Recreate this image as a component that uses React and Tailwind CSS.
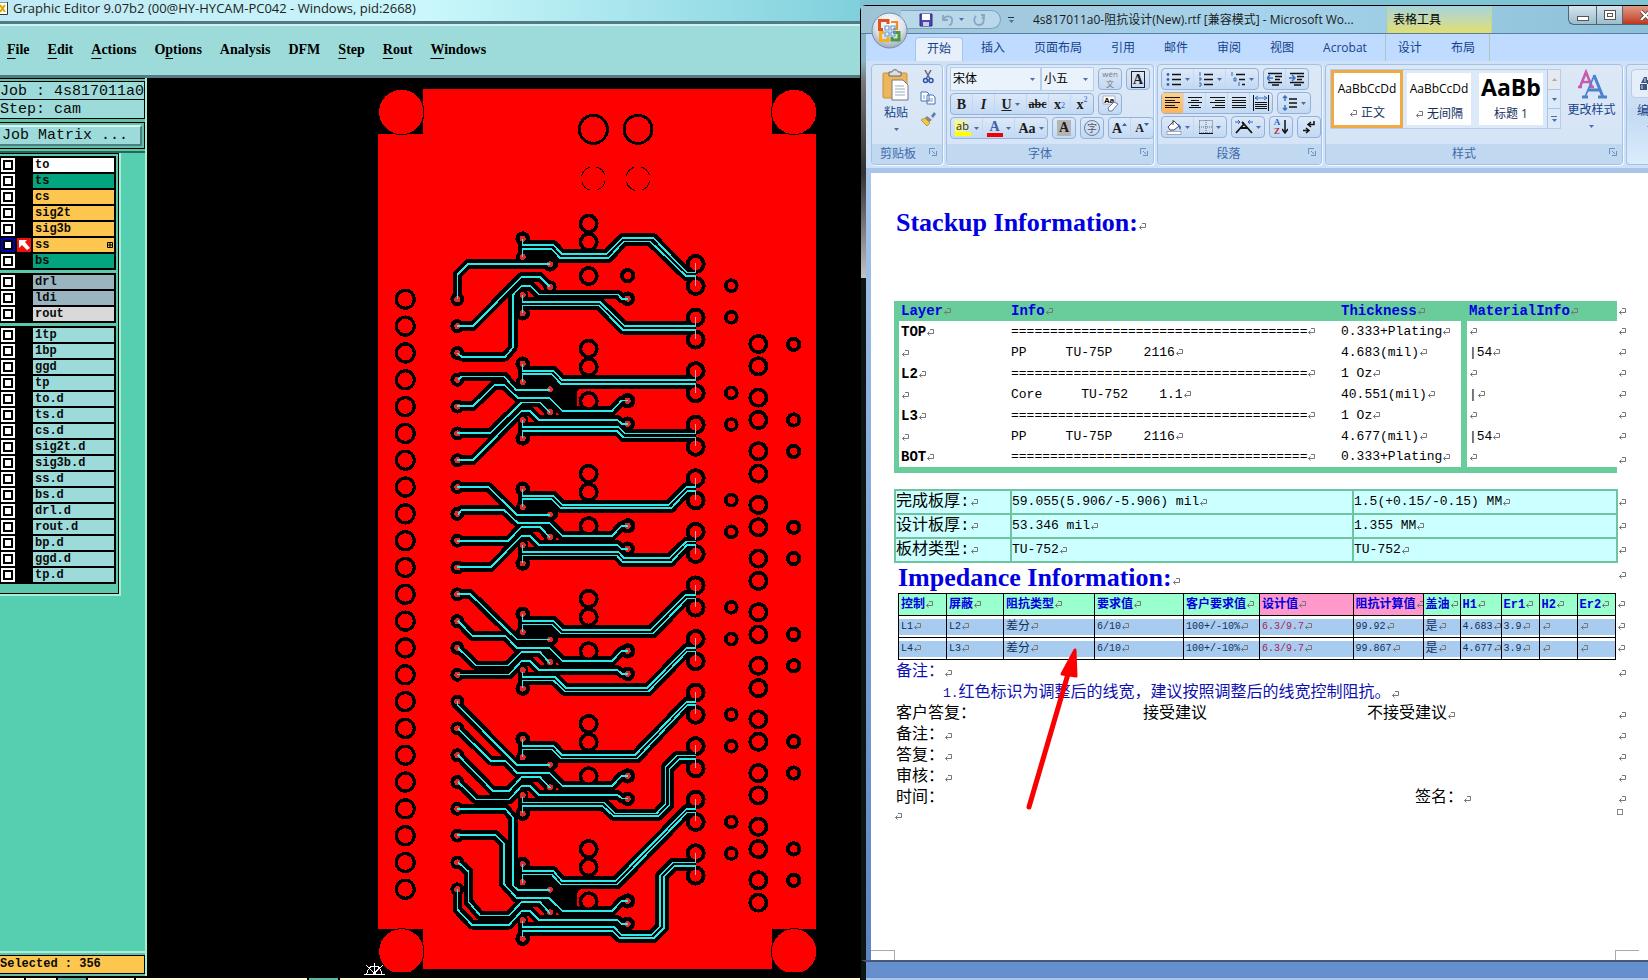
import React from 'react';
import clsx from 'clsx';

const MENUS = [
  { label: 'File', key: 0 },
  { label: 'Edit', key: 0 },
  { label: 'Actions', key: 0 },
  { label: 'Options', key: 1 },
  { label: 'Analysis', key: -1 },
  { label: 'DFM', key: -1 },
  { label: 'Step', key: 0 },
  { label: 'Rout', key: 0 },
  { label: 'Windows', key: 0 },
];

const LAYER_GROUPS = [
  [
    { name: 'to', color: 'bg-white' },
    { name: 'ts', color: 'bg-[#02a57d]' },
    { name: 'cs', color: 'bg-[#fdc64f]' },
    { name: 'sig2t', color: 'bg-[#fdc64f]' },
    { name: 'sig3b', color: 'bg-[#fdc64f]' },
    { name: 'ss', color: 'bg-[#fdc64f]', active: true },
    { name: 'bs', color: 'bg-[#02a57d]' },
  ],
  [
    { name: 'drl', color: 'bg-[#9ab5bf]' },
    { name: 'ldi', color: 'bg-[#9ab5bf]' },
    { name: 'rout', color: 'bg-[#d9d9d9]' },
  ],
  ['1tp', '1bp', 'ggd', 'tp', 'to.d', 'ts.d', 'cs.d', 'sig2t.d', 'sig3b.d', 'ss.d', 'bs.d', 'drl.d', 'rout.d', 'bp.d', 'ggd.d', 'tp.d']
    .map(name => ({ name, color: 'bg-[#9ddbda]' })),
];

// board artwork, three units to a pixel
const TRACES = [
  'M457 476V495H550L576 522H710L758 474H850L950 577H977',
  'M457 530V507H545L570 534H716L762 484H840L948 588H977',
  'M540 552H294L262 584V658',
  'M540 621L510 591H455L309 738H262',
  'M773 656H755L743 643H507L480 617H455L428 646V804L406 830H275L262 819',
  'M457 645V666H690L764 738H977',
  'M457 700V676H686L758 749H977',

  'M457 851V872H550L576 900H977',
  'M457 906V882H545L572 911H977',
  'M540 929H437L402 889H275L264 900',
  'M773 961H755L726 993H577L537 953H443L402 914H375L309 978H262',
  'M540 997L510 967H455L363 1058H262',
  'M773 1031H755L743 1020H507L480 993H455L309 1140H262',
  'M457 1020V1041H745L764 1060H977',
  'M457 1075V1052H740L760 1072H977',

  'M457 1227V1247H550L576 1274H896L950 1221H977',
  'M457 1282V1257H545L572 1284H904L952 1233H977',
  'M540 1304H440L356 1221H262',
  'M773 1338H755L726 1368H577L537 1328H443L402 1290H275L264 1303',
  'M540 1372L510 1341H455L415 1382H262',
  'M773 1407H755L743 1395H507L480 1368H455L363 1461H262',
  'M457 1395V1416H745L762 1434H898L950 1384H977',
  'M457 1450V1426H740L758 1446H904L952 1394H977',

  'M457 1602V1622H550L576 1649H842L948 1544H977',
  'M457 1657V1633H545L572 1660H850L952 1555H977',
  'M540 1678H440L300 1542H262',
  'M773 1713H755L726 1743H577L537 1703H440L406 1668H308L264 1623',
  'M540 1750L510 1716H455L415 1756H318L264 1704',
  'M773 1781H755L743 1770H507L480 1743H455L418 1783H262',
  'M457 1775V1791H555L588 1824H831L950 1704H977',
  'M457 1825V1801H550L585 1834H836L952 1714H977',

  'M457 1977V1998H550L576 2025H795L950 1865H977',
  'M457 2032V2008H545L572 2035H802L952 1875H977',
  'M540 2054H440L262 1875V1864',
  'M773 2088H755L726 2118H577L537 2078H440L406 2042H362L264 1945',
  'M540 2124L510 2091H455L418 2132H368L264 2025',
  'M773 2155H755L743 2145H507L480 2118H455L418 2158H318L264 2106',
  'M457 2150V2167H702L734 2200H860L886 2172V2062L922 2026H977',
  'M457 2200V2178H698L730 2208H865L898 2176V2068L928 2037H977',

  'M457 2353V2373H550L576 2403H736L950 2187H977',
  'M457 2408V2383H545L572 2413H742L952 2197H977',
  'M540 2429H443L428 2415V2212L406 2186H262',
  'M773 2463H755L726 2493H577L537 2454H440L402 2412V2290L376 2265H262',
  'M540 2500L510 2466H455L418 2506H330L295 2465V2374L264 2347',
  'M773 2532H755L743 2520H507L480 2493H455L418 2534H305L262 2488V2428',
  'M457 2523V2541H732L754 2564H845L870 2540V2386L910 2347H977',
  'M457 2572V2552H726L748 2574H852L882 2544V2390L914 2358H977',
];

const range = n => Array.from({ length: n }, (_, i) => i);
const ring = (x, y, outer, inner) => ({ x, y, outer, inner });

const RINGS = [
  ...range(23).flatMap(i => [ring(106, 658 + 80.45 * i, 32, 22), ring(262, 658 + 80.45 * i, 21, 9)]),
  ...range(6).flatMap(i => {
    const dy = 375.2 * i;
    return [
      ring(656, 431 + dy, 30, 19), ring(656, 486 + dy, 30, 19), ring(656, 588 + dy, 30, 19),
      ring(458, 476 + dy, 22, 9), ring(458, 531 + dy, 20, 9), ring(458, 645 + dy, 17, 9), ring(458, 700 + dy, 22, 9),
      ring(540, 553 + dy, 22, 9), ring(540, 621 + dy, 20, 9),
      ring(773, 587 + dy, 23, i ? 9 : 11), ring(773, 656 + dy, 22, 9),
    ];
  }),
  ...range(12).flatMap(i => [ring(977, 552 + 160.7 * i, 30, 18), ring(977, 618 + 160.8 * i, 30, 18)]),
  ...range(6).flatMap(i => [ring(1084, 617 + 321.7 * i, 22, 11), ring(1084, 712 + 321.7 * i, 22, 11)]),
  ...range(11).flatMap(i => [ring(1165, 792 + 160.9 * i, 30, 19), ring(1165, 859 + 160.9 * i, 30, 19)]),
  ring(1271, 793, 23, 11),
  ...range(5).flatMap(i => [ring(1271, 1020 + 321.7 * i, 23, 11), ring(1271, 1114 + 321.7 * i, 23, 11)]),
];

const CORNERS = [[94, 96], [1272, 96], [94, 2614], [1272, 2614]];

function Board() {
  return (
    <svg viewBox="-669 -6 2139 2694" preserveAspectRatio="xMinYMin slice" shapeRendering="crispEdges" className="block h-full w-full bg-black">
      <path d="M159 27H1206V162H1338V2548H1206V2667H159V2548H24V162H159Z" fill="#fe0000" />
      {CORNERS.map(([x, y]) => <circle key={`${x}-${y}`} cx={x} cy={y} r="68" fill="#fe0000" stroke="#000" strokeWidth="3" />)}
      <rect x="20" y="2677" width="1330" height="20" fill="#000" />
      {[670, 804].map(x => (
        <g key={x} fill="none" stroke="#000">
          <circle cx={x} cy="148" r="42" strokeWidth="9" />
          <circle cx={x} cy="296" r="36" strokeWidth="3" strokeDasharray="36 20.5" strokeDashoffset="48" />
        </g>
      ))}
      <g fill="none" stroke="#000" strokeWidth="29" strokeLinejoin="round">
        {TRACES.map(d => <path key={d} d={d} />)}
      </g>
      {range(6).map(i => <rect key={i} x="455" y={500 + 375.2 * i} width="108" height="60" />)}
      <path d="M540 905H640L622 935V985H575L530 945ZM540 2410H640L622 2440V2485H575L530 2450Z" />
      {RINGS.map(r => <circle key={`o${r.x}-${r.y}`} cx={r.x} cy={r.y} r={r.outer} />)}
      {RINGS.map(r => <circle key={`i${r.x}-${r.y}`} cx={r.x} cy={r.y} r={r.inner} fill={r.inner === 9 ? '#e22a2a' : '#fe0000'} />)}
      <path d="M625 978V952L640 932M625 2480V2454L640 2434" fill="none" stroke="#c00" strokeWidth="3" strokeDasharray="8 3" />
      <g fill="none" stroke="#2deaea" strokeWidth="5">
        {TRACES.map(d => <path key={d} d={d} />)}
      </g>
      <g stroke="#c9b0b0" strokeWidth="3">
        {range(12).map(i => <path key={i} d={`M977 ${550 + 160.7 * i}v27m0 13v27`} />)}
      </g>
      <path d="M-18 2683H45M13 2648V2682M-12 2656L16 2682M38 2656L10 2682M-4 2666L4 2658H22L30 2666M-10 2682L-4 2666M36 2682L30 2666" fill="none" stroke="#fff" strokeWidth="3" />
    </svg>
  );
}

function MenuLabel({ label, index }) {
  if (index < 0) return label;
  return <>{label.slice(0, index)}<span className="underline underline-offset-4">{label[index]}</span>{label.slice(index + 1)}</>;
}

function LayerRow({ layer }) {
  const id = `layer-${layer.name}`;
  return (
    <div className="flex h-[14px]">
      <input
        id={id}
        type="checkbox"
        defaultChecked={layer.active}
        className={clsx('ml-px size-[14px] shrink-0 appearance-none border-2 bg-white shadow-[inset_0_0_0_2px_#000]', layer.active ? 'border-[#0000b4]' : 'border-white')}
      />
      <span className="ml-[2px] w-[16px] shrink-0 pr-[2px]">
        {layer.active && (
          <svg viewBox="0 0 14 14" className="block size-[14px] bg-[#f01010]">
            <path d="M2 2H10L8 4L13 10L10 12L5 7L2 10Z" fill="#fff" />
          </svg>
        )}
      </span>
      <label htmlFor={id} className={clsx('mr-[2px] flex flex-1 items-center justify-between pl-[2px] text-[12px] leading-[14px] font-bold', layer.color)}>
        {layer.name}
        {layer.active && (
          <svg viewBox="0 0 6 6" className="mr-px size-[6px]">
            <path d="M.5 .5H5.5V5.5H.5ZM3 0V6M0 3H6" fill="none" stroke="#000" />
          </svg>
        )}
      </label>
    </div>
  );
}

function Sidebar() {
  return (
    <aside className="flex w-[147px] shrink-0 flex-col border-r-2 border-[#a6eed6] bg-[#55cfb0] font-['Liberation_Mono',monospace] text-[#0a0a0a]">
      <div className="border-t border-b-2 border-t-black border-b-[#1f6a5a] bg-[#66bfa6] pt-[2px] pb-[2px]">
        <p className="h-[19px] border border-l-0 border-black bg-[#9ddbda] text-[15px] leading-[19px] font-medium whitespace-nowrap">Job : 4s817011a0</p>
        <p className="h-[19px] border border-t-0 border-l-0 border-black bg-[#9ddbda] text-[15px] leading-[20px]">Step: cam</p>
        <div className="mt-[3px] border border-l-0 border-black bg-[#66bfa6] py-[2px] pr-[2px]">
          <button className="block h-[21px] w-full border-t-2 border-r-2 border-b-2 border-t-[#d5f5f2] border-r-[#4a7f86] border-b-[#4a7f86] bg-[#9ddbda] pl-[2px] text-left text-[15px] leading-[17px]">Job Matrix ...</button>
        </div>
      </div>
      <div className="mr-[24px] border-r-2 border-b-2 border-[#a6eed6]">
        <div className="border-t border-r border-b border-black bg-[#5cc8ac] pt-[2px] pr-[2px] pb-[9px]">
          <div className="flex flex-col gap-[3px]">
            {LAYER_GROUPS.map((group, i) => (
              <div key={i} className="flex flex-col gap-[2px] bg-black py-[2px]">
                {group.map(layer => <LayerRow key={layer.name} layer={layer} />)}
              </div>
            ))}
          </div>
        </div>
      </div>
      <div className="mt-auto border-t-2 border-[#a6eed6] bg-[#66bfa6] pt-[2px] pb-[2px]">
        <p className="h-[19px] border border-l-0 border-black bg-[#fdc64f] text-[12px] leading-[17px] font-bold">Selected : 356</p>
      </div>
    </aside>
  );
}

function GraphicEditor() {
  return (
    <section className="flex min-w-0 flex-col bg-black">
      <header className="flex h-[21px] items-center gap-[5px] bg-linear-to-r from-[#bfe9f4] via-[#c9f7fb] to-[#7fd0dc] pb-[5px] font-['Open_Sans',sans-serif] text-[13px] leading-[16px] whitespace-nowrap text-[#222]">
        <svg viewBox="0 0 8 13" className="h-[13px] w-[8px]">
          <path d="M0 0H7.500V12.500H0" fill="#fff" stroke="#333" />
          <path d="M0 3L5 10M5 3L0 10" stroke="#d8a800" strokeWidth="2" />
        </svg>
        <h1>Graphic Editor 9.07b2 (00@HY-HYCAM-PC042 - Windows, pid:2668)</h1>
      </header>
      <nav className="flex h-[57px] items-center gap-[18px] border-t-3 border-b-3 border-[#527a84] bg-[#9ddbda] pl-[7px] font-['Liberation_Serif',serif] text-[14px] font-bold text-black shadow-[inset_0_2px_0_#cdf2f2]">
        {MENUS.map(m => <button key={m.label}><MenuLabel label={m.label} index={m.key} /></button>)}
      </nav>
      <div className="flex min-h-0 flex-1">
        <Sidebar />
        <main className="min-w-0 flex-1"><Board /></main>
      </div>
      <footer className="flex h-[5px] gap-[2px] border-t-2 border-black bg-black">
        <span className="w-[24px] bg-[#ffffd0]" />
        <span className="w-[30px] bg-[#ffffd0]" />
        <span className="w-[28px] bg-[#5ab9a0]" />
        <span className="w-[46px] bg-[#ffffd0]" />
        <span className="w-[171px] bg-[#ffffd0]" />
        <span className="w-[29px] bg-[#5ab9a0]" />
        <span className="flex-1 bg-[#ffffd0]" />
      </footer>
    </section>
  );
}

function Caret() {
  return <svg viewBox="0 0 5 3" className="h-[3px] w-[5px] shrink-0"><path d="M0 0H5L2.500 3Z" fill="#4a6ea5" /></svg>;
}

// paragraph mark
function Mark({ className }) {
  return (
    <svg viewBox="0 0 8 8" className={clsx('inline-block size-[8px] shrink-0', className)}>
      <path d="M4 1.500H7.500V5.500H1.500M3.500 3.500L1.500 5.500L3.500 7.500" fill="none" stroke="#777" />
    </svg>
  );
}

function Tools({ children }) {
  return <div className="flex h-[22px] shrink-0 items-center divide-x divide-[#c3d8f0] rounded-sm border border-[#93b1d9] bg-linear-to-b from-[#dce9f8] to-[#c3d9f3]">{children}</div>;
}

function Tool({ label, wide, active, children }) {
  return (
    <button aria-label={label} className={clsx('flex h-full shrink-0 items-center justify-center', wide ? 'w-[32px] gap-[3px]' : 'w-[22px]', active && 'bg-linear-to-b from-[#fcd08a] to-[#fdb45a]')}>
      {children}
      {wide && <Caret />}
    </button>
  );
}

function Lines({ rows }) {
  return (
    <svg viewBox="0 0 16 14" className="h-[14px] w-[16px]" shapeRendering="crispEdges">
      {rows.map(([x, w], i) => <rect key={i} x={x} y={1 + i * 2.5} width={w} height="1.400" fill="#111" />)}
    </svg>
  );
}

function ListIcon({ kind }) {
  return (
    <svg viewBox="0 0 16 16" className="size-[16px]">
      {kind === 'multi'
        ? <path d="M6 3.500H15M9 8.500H15M12 13.500H15" stroke="#111" strokeWidth="1.500" />
        : <path d="M6 3.500H15M6 8.500H15M6 13.500H15" stroke="#111" strokeWidth="1.500" />}
      {kind === 'bullet' && [3.5, 8.5, 13.5].map(y => <circle key={y} cx="2" cy={y} r="1.400" fill="#3b62b5" />)}
      {kind === 'number' && <path d="M2 1V5M1 7H3V9H1M1 12H3V15H1" fill="none" stroke="#3b62b5" />}
      {kind === 'multi' && <path d="M2 1V5M4 7H6V10H4ZM9 11V15" fill="none" stroke="#3b62b5" />}
    </svg>
  );
}

function IndentIcon({ right }) {
  return (
    <svg viewBox="0 0 16 14" className="h-[14px] w-[16px]">
      <path d="M1 1.500H15M8 4.500H15M8 7.500H13M1 10.500H15M5 13H12" stroke="#111" strokeWidth="1.500" />
      <path d={right ? 'M0 6H5M3 3L6 6L3 9' : 'M1 6H6M3 3L0 6L3 9'} fill="none" stroke="#3b72c5" strokeWidth="1.500" />
    </svg>
  );
}

function Group({ title, launcher, className, children }) {
  return (
    <section className={clsx('flex h-[101px] shrink-0 flex-col overflow-hidden rounded-sm border border-[#a3c1e6] bg-linear-to-b from-[#dde8f5] to-[#d3e4f7] shadow-[1px_1px_0_#f2f8ff]', className)}>
      <div className="flex-1">{children}</div>
      <h3 className="relative h-[20px] bg-[#c1d8f1] text-center text-[12px] leading-[20px] text-[#3e6aaa]">
        {title}
        {launcher && (
          <svg viewBox="0 0 8 8" className="absolute top-[4px] right-[5px] size-[8px]">
            <path d="M.5 6V.5H6M3 3L6 6M7.500 3V7.500H3" fill="none" stroke="#6b8fbf" />
          </svg>
        )}
      </h3>
    </section>
  );
}

function ClipboardGroup() {
  return (
    <Group title={<span className="pr-[18px]">剪贴板</span>} launcher className="w-[72px]">
      <div className="flex gap-[10px] pt-[4px] pl-[10px]">
        <button className="flex flex-col items-center text-[12px] text-[#15428b]">
          <svg viewBox="0 0 28 32" className="h-[32px] w-[28px]">
            <rect x="1" y="4" width="24" height="25" rx="1" fill="#ecb75c" stroke="#c98f3c" />
            <path d="M7 3H10C10 0 16 0 16 3H19V7H7Z" fill="#ddd" stroke="#666" />
            <path d="M10 11H21L26 16V31H10Z" fill="#fff" stroke="#778" />
            <path d="M13 17H22M13 20H23M13 23H23M13 26H23" stroke="#9ab" />
          </svg>
          <span className="mt-[3px] mb-[6px] leading-[18px]">粘贴</span>
          <Caret />
        </button>
        <div className="flex flex-col items-center gap-[7px] pt-px">
          <button aria-label="剪切">
            <svg viewBox="0 0 12 14" className="block h-[14px] w-[12px]">
              <path d="M3 0L8 9M9 0L4 9" stroke="#667" strokeWidth="1.500" />
              <path d="M1.500 10.500a2 2 0 1 0 4 0a2 2 0 1 0-4 0M7 10.500a2 2 0 1 0 4 0a2 2 0 1 0-4 0" fill="none" stroke="#2d55b0" strokeWidth="1.500" />
            </svg>
          </button>
          <button aria-label="复制">
            <svg viewBox="0 0 16 14" className="block h-[14px] w-[16px]">
              <path d="M1 1H7L9 3V10H1ZM7 4H13L15 6V13H7Z" fill="#fff" stroke="#4a72b8" />
              <path d="M9 8H13M9 10H13M3 5H5M3 7H5" stroke="#7a9ad0" />
            </svg>
          </button>
          <button aria-label="格式刷">
            <svg viewBox="0 0 16 14" className="block h-[14px] w-[16px]">
              <path d="M11 4L14 0L16 2L13 6Z" fill="#667ba8" />
              <path d="M7 4L12 8L9 10L5 6Z" fill="#888" />
              <path d="M5 6L10 11L7 14L1 8Z" fill="#f0c84c" stroke="#a88420" strokeWidth=".7" />
            </svg>
          </button>
        </div>
      </div>
    </Group>
  );
}

function FontSelect({ label, value, className }) {
  return (
    <label className={clsx('relative flex items-center border border-[#b8cfea] bg-[#eaf2fb]', className)}>
      <select aria-label={label} defaultValue={value} className="h-[22px] w-full appearance-none pl-[2px] text-[12px] text-black outline-none">
        <option>{value}</option>
      </select>
      <span className="pointer-events-none absolute right-[5px] flex"><Caret /></span>
    </label>
  );
}

function FontGroup() {
  return (
    <Group title={<span className="pr-[20px]">字体</span>} launcher className="w-[208px]">
      <div className="flex flex-col gap-[2px] px-[3px] pt-[2px] font-['Liberation_Serif','Noto_Sans_CJK_SC',serif] text-[#1c1c1c]">
        <div className="flex items-center gap-[4px]">
          <div className="flex font-['Open_Sans','Noto_Sans_CJK_SC',sans-serif]">
            <FontSelect label="字体" value="宋体" className="w-[91px]" />
            <FontSelect label="字号" value="小五" className="w-[53px]" />
          </div>
          <Tools>
            <Tool label="拼音指南">
              <span className="flex flex-col items-center font-['Open_Sans','Noto_Sans_CJK_SC',sans-serif] text-[8px] leading-[10px] text-[#777]"><span>wén</span><span>文</span></span>
            </Tool>
          </Tools>
          <Tools><Tool label="字符边框"><span className="border border-[#222] px-px text-[14px] leading-[15px] font-bold">A</span></Tool></Tools>
        </div>
        <div className="flex gap-[4px]">
          <Tools>
            <Tool label="加粗"><b className="text-[14px]">B</b></Tool>
            <Tool label="倾斜"><b className="text-[14px] italic">I</b></Tool>
            <Tool label="下划线" wide><b className="text-[14px] underline">U</b></Tool>
            <Tool label="删除线"><b className="text-[12px] line-through">abc</b></Tool>
            <Tool label="下标"><b className="text-[14px]">x</b><sub className="text-[8px] text-[#2d62c0]">2</sub></Tool>
            <Tool label="上标"><b className="text-[14px]">x</b><sup className="text-[8px] text-[#2d62c0]">2</sup></Tool>
          </Tools>
          <Tools>
            <Tool label="清除格式">
              <svg viewBox="0 0 18 18" className="size-[18px]">
                <path d="M2 1H14V9H2Z" fill="#fff" stroke="#99a" strokeWidth=".7" />
                <text x="3" y="8" fontSize="8" fontWeight="bold" fontFamily="Liberation Sans">Aa</text>
                <path d="M7 13L13 7L17 9L11 16H8Z" fill="#fff" stroke="#667aa8" />
              </svg>
            </Tool>
          </Tools>
        </div>
        <div className="flex gap-[4px]">
          <Tools>
            <Tool label="突出显示" wide>
              <span className="flex flex-col font-['Open_Sans',sans-serif] text-[11px] leading-[12px]"><span className="bg-linear-to-r from-[#ffff66] to-transparent">ab</span><span className="h-[4px] w-[16px] bg-[#ffff00]" /></span>
            </Tool>
            <Tool label="字体颜色" wide>
              <span className="flex w-[16px] flex-col items-center text-[14px] leading-[13px] font-bold text-[#3b5fa8]"><span>A</span><span className="h-[4px] w-full bg-[#f00000]" /></span>
            </Tool>
            <Tool label="更改大小写" wide><b className="text-[14px]">Aa</b></Tool>
          </Tools>
          <Tools><Tool label="字符底纹"><b className="bg-[#b5b5b5] px-[2px] text-[14px] leading-[16px]">A</b></Tool></Tools>
          <Tools>
            <Tool label="带圈字符"><span className="flex size-[16px] items-center justify-center rounded-full border border-[#667a98] text-[10px] text-[#556]">字</span></Tool>
          </Tools>
          <Tools>
            <Tool label="增大字体"><b className="text-[14px]">A</b><svg viewBox="0 0 5 3" className="mb-[8px] h-[3px] w-[5px]"><path d="M0 3H5L2.500 0Z" fill="#2d62c0" /></svg></Tool>
            <Tool label="缩小字体"><b className="text-[12px]">A</b><svg viewBox="0 0 5 3" className="mb-[8px] h-[3px] w-[5px]"><path d="M0 0H5L2.500 3Z" fill="#2d62c0" /></svg></Tool>
          </Tools>
        </div>
      </div>
    </Group>
  );
}

function ParagraphGroup() {
  return (
    <Group title={<span className="pr-[22px]">段落</span>} launcher className="w-[165px]">
      <div className="flex flex-col gap-[2px] px-[3px] pt-[3px]">
        <div className="flex gap-[4px]">
          <Tools>
            <Tool label="项目符号" wide><ListIcon kind="bullet" /></Tool>
            <Tool label="编号" wide><ListIcon kind="number" /></Tool>
            <Tool label="多级列表" wide><ListIcon kind="multi" /></Tool>
          </Tools>
          <Tools>
            <Tool label="减少缩进量"><IndentIcon /></Tool>
            <Tool label="增加缩进量"><IndentIcon right /></Tool>
          </Tools>
        </div>
        <div className="flex gap-[4px]">
          <Tools>
            <Tool label="左对齐" active><Lines rows={[[0, 15], [0, 10], [0, 15], [0, 10], [0, 13]]} /></Tool>
            <Tool label="居中"><Lines rows={[[1, 14], [4, 8], [1, 14], [4, 8], [2, 12]]} /></Tool>
            <Tool label="右对齐"><Lines rows={[[1, 15], [6, 10], [1, 15], [6, 10], [3, 13]]} /></Tool>
            <Tool label="两端对齐"><Lines rows={[[1, 14], [1, 14], [1, 14], [1, 14], [1, 14]]} /></Tool>
            <Tool label="分散对齐">
              <svg viewBox="0 0 16 16" className="size-[16px]">
                <path d="M.5 0V16M15.500 0V16M2 7.500H14M2 9.500H14M2 11.500H14M2 13.500H14" stroke="#111" />
                <path d="M2 3H14M5 1L2 3L5 5M11 1L14 3L11 5" fill="none" stroke="#3b72c5" />
              </svg>
            </Tool>
          </Tools>
          <Tools>
            <Tool label="行距" wide>
              <svg viewBox="0 0 16 16" className="size-[16px]">
                <path d="M7 4H15M7 8H15M7 12H15" stroke="#111" strokeWidth="1.500" />
                <path d="M3 1V6M1 3L3 1L5 3M3 10V15M1 13L3 15L5 13" fill="none" stroke="#3b72c5" strokeWidth="1.500" />
              </svg>
            </Tool>
          </Tools>
        </div>
        <div className="flex gap-[4px]">
          <Tools>
            <Tool label="底纹" wide>
              <svg viewBox="0 0 16 16" className="size-[16px]">
                <path d="M2 8L8 2L13 7L8 11H4Z" fill="#fff" stroke="#445" />
                <path d="M7 1V6" stroke="#445" /><path d="M12 5C16 7 15 10 14 11C13 9 13 8 12 7Z" fill="#3b62b5" />
                <rect x="1" y="12.500" width="14" height="3" fill="#fff" stroke="#889" strokeWidth=".7" />
              </svg>
            </Tool>
            <Tool label="边框" wide>
              <svg viewBox="0 0 14 14" className="size-[14px]">
                <path d="M.5 .5H13.500V13H.5ZM7 0V13M0 7H14" fill="none" stroke="#667" strokeDasharray="1 1" />
                <path d="M0 13.500H14" stroke="#111" />
              </svg>
            </Tool>
          </Tools>
          <Tools>
            <Tool label="中文版式" wide>
              <svg viewBox="0 0 18 16" className="h-[16px] w-[18px]">
                <path d="M1 14L9 5L17 14M5 9H13M9 5L7 3" fill="none" stroke="#111" strokeWidth="1.800" />
                <path d="M0 3H5M3 1L5 3L3 5M18 3H13M15 1L13 3L15 5" fill="none" stroke="#2d62c0" />
              </svg>
            </Tool>
          </Tools>
          <Tools>
            <Tool label="排序">
              <span className="flex flex-col font-['Liberation_Serif',serif] text-[9px] leading-[9px] font-bold"><span className="text-[#2d62c0]">A</span><span className="text-[#b03030]">Z</span></span>
              <svg viewBox="0 0 6 14" className="ml-[2px] h-[14px] w-[6px]"><path d="M3 0V13M0 9L3 13L6 9" fill="none" stroke="#111" strokeWidth="1.500" /></svg>
            </Tool>
          </Tools>
          <Tools>
            <Tool label="编辑标记">
              <svg viewBox="0 0 14 14" className="size-[14px]"><path d="M12 1V4.500H6M9 2L6 4.500L9 7M1 10.500H7M4 8L7 10.500L4 13" fill="none" stroke="#111" strokeWidth="1.500" /></svg>
            </Tool>
          </Tools>
        </div>
      </div>
    </Group>
  );
}

function StylesGroup() {
  return (
    <Group title={<span className="pr-[20px]">样式</span>} launcher className="w-[298px]">
      <div className="flex pt-[4px] pl-[4px]">
        <div className="flex h-[60px] border border-[#b5cdea] bg-[#dce9f8]">
          <button className="flex w-[72px] flex-col items-center justify-between border-3 border-[#eeab45] bg-white py-[4px] text-[12px] leading-[16px] whitespace-nowrap">
            <span className="pt-[4px] text-black">AaBbCcDd</span>
            <span className="flex items-center gap-[4px] text-[#15305f]"><Mark className="size-[6px]" />正文</span>
          </button>
          <button className="my-[3px] ml-[4px] flex w-[64px] flex-col items-center justify-between bg-white py-[3px] text-[12px] leading-[16px] whitespace-nowrap">
            <span className="pt-[5px] text-black">AaBbCcDd</span>
            <span className="flex items-center gap-[4px] text-[#15305f]"><Mark className="size-[6px]" />无间隔</span>
          </button>
          <button className="my-[3px] mr-[4px] ml-[8px] flex w-[64px] flex-col items-center justify-between bg-white pb-[3px] text-[12px] leading-[16px] whitespace-nowrap">
            <span className="text-[23px] leading-[29px] font-bold text-black">AaBb</span>
            <span className="text-[#15305f]">标题 1</span>
          </button>
          <div className="flex w-[13px] flex-col divide-y divide-[#a9c5e8] border-l border-[#a9c5e8]">
            <button aria-label="上一行" className="flex flex-1 items-center justify-center bg-[#e6e9ee]"><svg viewBox="0 0 5 3" className="h-[3px] w-[5px]"><path d="M0 3H5L2.500 0Z" fill="#aaa" /></svg></button>
            <button aria-label="下一行" className="flex flex-1 items-center justify-center"><Caret /></button>
            <button aria-label="其他" className="flex flex-1 flex-col items-center justify-center gap-[2px]"><span className="h-px w-[6px] bg-[#4a6ea5]" /><Caret /></button>
          </div>
        </div>
        <button className="flex flex-1 flex-col items-center text-[12px] text-[#15428b]">
          <svg viewBox="0 0 30 28" className="h-[30px] w-[30px]">
            <path d="M1 17H5M13 17H17M3 17L9 2L15 17M5 12H13" fill="none" stroke="#c65cae" strokeWidth="2.600" />
            <path d="M8 27L17 6" stroke="#4a83cc" strokeWidth="1.800" />
            <path d="M17 5L26 27M11 20H23M5 27H11M21 27H30" fill="none" stroke="#4a83cc" strokeWidth="3" />
          </svg>
          <span className="mt-[2px] mb-[6px] leading-[18px]">更改样式</span>
          <Caret />
        </button>
      </div>
    </Group>
  );
}

function EditGroup() {
  return (
    <section className="h-[101px] min-w-0 flex-1 overflow-hidden rounded-l-sm border border-r-0 border-[#a3c1e6] bg-linear-to-b from-[#dde8f5] via-[#c5dbf4] to-[#d9edfb] pt-[4px] pl-[4px]">
      <button className="flex w-[36px] flex-col items-center text-[12px] text-[#15428b]">
        <span className="flex h-[29px] w-[36px] items-center justify-center rounded-sm border border-[#b5cdea] bg-[#e6eff9]">
          <svg viewBox="0 0 20 16" className="h-[16px] w-[20px]">
            <path d="M2 7L5 1H8V7ZM12 7V1H15L18 7ZM1 8H8V14H1ZM12 8H19V14H12ZM8 4H12V8H8Z" fill="#3d567f" />
            <path d="M3 9V13M14 9V13M6 2V6M14 2V6" stroke="#cfe0f4" />
          </svg>
        </span>
        <span className="mt-[4px] mb-[6px] leading-[18px]">编辑</span>
        <Caret />
      </button>
    </section>
  );
}

function OfficeOrb() {
  return (
    <button aria-label="Office" className="absolute top-[6px] left-[10px] z-10">
      <svg viewBox="0 0 37 37" className="block size-[37px]">
        <defs>
          <radialGradient id="orb" cx="50%" cy="30%" r="70%">
            <stop offset="0" stopColor="#ffffff" />
            <stop offset=".6" stopColor="#dde2ea" />
            <stop offset="1" stopColor="#9fa9ba" />
          </radialGradient>
        </defs>
        <circle cx="18.500" cy="18.500" r="17.500" fill="url(#orb)" stroke="#7b8ba8" />
        <g fill="none" strokeWidth="3">
          <path d="M17 12V8.500H8.500V17.500H12" stroke="#e0521c" />
          <path d="M20 10H26V17H22" stroke="#f08a2a" strokeWidth="2.200" />
          <path d="M13 20.500H9.500V28.500H17V25" stroke="#f0b020" />
          <path d="M22 20.500H28V28H21V25" stroke="#4a9a3c" />
          <path d="M14 14H18V18H14ZM20 14H24V18H20ZM14 20H18V24H14ZM20 20H24V24H20Z" stroke="#6a9ad8" strokeWidth="1.200" />
        </g>
      </svg>
    </button>
  );
}

const TABS = ['开始', '插入', '页面布局', '引用', '邮件', '审阅', '视图', 'Acrobat'];

function WordHeader() {
  return (
    <>
      <OfficeOrb />
      <header className="flex h-[28px] items-stretch overflow-hidden border-b border-[#55809f] bg-linear-to-r from-[#9fc3d6] via-[#a6d3ec] to-[#8cc0d8]">
        <div className="my-[4px] ml-[40px] flex w-[100px] shrink-0 items-center gap-[9px] rounded-r-full border border-l-0 border-[#7aa3bf] bg-[#b9d9ea] pl-[18px]">
          <button aria-label="保存">
            <svg viewBox="0 0 14 14" className="block size-[14px]">
              <path d="M1 1H13V13H1Z" fill="#4a46b8" stroke="#2a2a80" />
              <rect x="3" y="1" width="8" height="6" fill="#fff" /><rect x="4" y="9" width="6" height="4" fill="#ccd" />
            </svg>
          </button>
          <button aria-label="撤消" className="flex items-center gap-[5px]">
            <svg viewBox="0 0 12 12" className="size-[12px]"><path d="M1 1V6H6M1 6C3 1 11 1 10 7C10 9 9 11 7 11" fill="none" stroke="#8aa5c0" strokeWidth="1.800" /></svg>
            <Caret />
          </button>
          <button aria-label="重复">
            <svg viewBox="0 0 12 12" className="block size-[12px]"><path d="M8 1H11V5M3 2C0 5 1 11 6 11C11 11 12 5 9 3" fill="none" stroke="#8aa5c0" strokeWidth="1.800" /></svg>
          </button>
        </div>
        <button aria-label="自定义快速访问工具栏" className="mx-[7px] flex flex-col items-center justify-center gap-[2px]"><span className="h-px w-[6px] bg-[#234]" /><Caret /></button>
        <h2 className="ml-[12px] w-[354px] shrink-0 truncate text-[12px] leading-[28px] text-[#1a1a1a]">4s817011a0-阻抗设计(New).rtf [兼容模式] - Microsoft Wo...</h2>
        <span className="w-[105px] shrink-0 border-x border-[#c5d88a] bg-linear-to-b from-[#a6d3dc] to-[#e2dd6e] pl-[5px] text-[12px] leading-[28px] text-black">表格工具</span>
        <div className="ml-auto flex h-[19px] rounded-bl-md border border-t-0 border-r-0 border-[#48687a] bg-linear-to-b from-[#d5e5ee] to-[#9dbccb]">
          <button aria-label="最小化" className="flex w-[28px] items-center justify-center border-r border-[#48687a]"><span className="mt-[6px] h-[5px] w-[12px] border border-[#555] bg-white" /></button>
          <button aria-label="最大化" className="flex w-[26px] items-center justify-center border-r border-[#48687a]"><span className="h-[10px] w-[12px] border border-[#555] bg-white p-[2px]"><span className="block h-full border border-[#555]" /></span></button>
          <button aria-label="关闭" className="flex w-[25px] items-center justify-end bg-linear-to-b from-[#e09a86] to-[#c0341c]">
            <svg viewBox="0 0 8 10" className="h-[10px] w-[8px]"><path d="M1 1L10 10M1 10L10 1" stroke="#444" strokeWidth="3.500" /><path d="M1 1L10 10M1 10L10 1" stroke="#fff" strokeWidth="2" /></svg>
          </button>
        </div>
      </header>
      <nav className="flex h-[27px] items-end gap-[7px] overflow-hidden border-l-5 border-[#86b3c6] bg-[#bfdbff] pl-[49px] text-[12px] text-[#15428b]">
        {TABS.map((tab, i) => (
          <button key={tab} className={clsx('h-[24px] shrink-0 rounded-t-sm px-[11px] pb-[2px]', i === 0 && 'border border-b-0 border-[#a4c4ea] bg-[#e6effa] px-[10px]')}>{tab}</button>
        ))}
        <span className="flex h-[27px] w-[105px] shrink-0 gap-[7px] border-x border-[#a9c6b8] pt-px pl-px">
          <button className="px-[11px]">设计</button>
          <button className="px-[11px]">布局</button>
        </span>
      </nav>
    </>
  );
}

const EQ = '='.repeat(38);
const STACKUP = [
  ['TOP', EQ, '0.333+Plating', ''],
  ['', 'PP     TU-75P    2116', '4.683(mil)', '|54'],
  ['L2', EQ, '1 Oz', ''],
  ['', 'Core     TU-752    1.1', '40.551(mil)', '|'],
  ['L3', EQ, '1 Oz', ''],
  ['', 'PP     TU-75P    2116', '4.677(mil)', '|54'],
  ['BOT', EQ, '0.333+Plating', ''],
];

const THICKNESS = [
  ['完成板厚:', '59.055(5.906/-5.906) mil', '1.5(+0.15/-0.15) MM'],
  ['设计板厚:', '53.346 mil', '1.355 MM'],
  ['板材类型:', 'TU-752', 'TU-752'],
];

const IMPEDANCE_COLS = [
  { label: '控制', width: 'w-[48px]' },
  { label: '屏蔽', width: 'w-[57px]' },
  { label: '阻抗类型', width: 'w-[91px]' },
  { label: '要求值', width: 'w-[89px]' },
  { label: '客户要求值', width: 'w-[76px]' },
  { label: '设计值', width: '', pink: true },
  { label: '阻抗计算值', width: 'w-[70px]', pink: true },
  { label: '盖油', width: 'w-[37px]' },
  { label: 'H1', width: 'w-[41px]' },
  { label: 'Er1', width: 'w-[38px]' },
  { label: 'H2', width: 'w-[38px]' },
  { label: 'Er2', width: 'w-[38px]' },
];

const IMPEDANCE = [
  ['L1', 'L2', '差分', '6/10', '100+/-10%', '6.3/9.7', '99.92', '是', '4.683', '3.9', '', ''],
  ['L4', 'L3', '差分', '6/10', '100+/-10%', '6.3/9.7', '99.867', '是', '4.677', '3.9', '', ''],
];

function StackupTable() {
  return (
    <table className="w-full table-fixed border-separate border-spacing-0 text-left text-[13px] leading-[20px] whitespace-pre text-black">
      <thead>
        <tr className="h-[20px] text-[14px] text-[#0000e0]">
          <th className="w-[117px] bg-[#69cd9b] p-0 pl-[7px]">Layer<Mark /></th>
          <th className="bg-[#69cd9b] p-0">Info<Mark /></th>
          <th className="w-[120px] bg-[#69cd9b] p-0">Thickness<Mark /></th>
          <th className="w-[156px] bg-[#69cd9b] p-0 pl-[8px]">MaterialInfo<Mark /></th>
          <td className="w-[12px] p-0 pl-px"><Mark /></td>
        </tr>
      </thead>
      <tbody>
        {STACKUP.map(([layer, info, thickness, material], i) => (
          <tr key={i} className={clsx('h-[21px]', i === STACKUP.length - 1 && '[&>.edge]:border-b-[6px]')}>
            <th className="edge border-l-[5px] border-[#69cd9b] p-0 pl-[2px] text-[14px]">{layer}<Mark /></th>
            <td className="edge border-[#69cd9b] p-0">{info}<Mark /></td>
            <td className="edge border-[#69cd9b] p-0">{thickness}<Mark /></td>
            <td className="edge border-l-[6px] border-[#69cd9b] p-0 pl-[2px]">{material}<Mark /></td>
            <td className="p-0 pl-px"><Mark /></td>
          </tr>
        ))}
      </tbody>
    </table>
  );
}

function ThicknessTable() {
  return (
    <table className="mt-[16px] w-full table-fixed border-collapse text-left text-[13px] leading-[20px] whitespace-nowrap text-black">
      <tbody>
        {THICKNESS.map(([label, mil, mm]) => (
          <tr key={label} className="h-[24px]">
            <th className="w-[116px] border-2 border-[#70c39f] bg-[#ccffff] p-0 text-[16px] font-normal">{label}<Mark /></th>
            <td className="border-2 border-[#70c39f] bg-[#ccffff] p-0">{mil}<Mark /></td>
            <td className="w-[264px] border-2 border-[#70c39f] bg-[#ccffff] p-0">{mm}<Mark /></td>
            <td className="w-[12px] p-0"><Mark /></td>
          </tr>
        ))}
      </tbody>
    </table>
  );
}

function ImpedanceTable() {
  return (
    <table className="ml-[4px] w-[calc(100%-4px)] table-fixed border-collapse text-left text-[10px] whitespace-nowrap text-[#12305a]">
      <thead>
        <tr className="h-[22px] text-[12px] leading-[18px] text-[#0000e0]">
          {IMPEDANCE_COLS.map(c => (
            <th key={c.label} className={clsx('overflow-hidden border border-black p-0 pl-[2px] font-bold', c.width, c.pink ? 'bg-[#ff99cc]' : 'bg-[#99ffcc]')}>{c.label}<Mark className="size-[7px]" /></th>
          ))}
          <td className="w-[14px] p-0 pl-px"><Mark /></td>
        </tr>
      </thead>
      <tbody>
        {IMPEDANCE.map(row => (
          <tr key={row[0]} className="h-[22px]">
            {row.map((cell, i) => (
              <td key={i} className="overflow-hidden border border-black p-0">
                <div className={clsx('h-[16px] bg-[#a8ccf0] pl-[2px] leading-[16px]', (i === 2 || i === 7) && 'text-[12px]', i === 5 && 'text-[#b02050]')}>{cell}<Mark className="size-[7px]" /></div>
              </td>
            ))}
            <td className="p-0 pl-px"><Mark /></td>
          </tr>
        ))}
      </tbody>
    </table>
  );
}

function Line({ children, end = true, className }) {
  return (
    <div className={clsx('flex h-[21px] items-center', className)}>
      <div className="flex flex-1 items-center">{children}</div>
      {end && <Mark className="mr-[3px]" />}
    </div>
  );
}

function Document() {
  return (
    <main className="relative flex flex-1 flex-col overflow-hidden bg-white pt-[32px] pr-[19px] pl-[23px] font-['Liberation_Mono','Noto_Sans_CJK_SC',monospace]">
      <h2 className="flex h-[36px] items-center pl-[2px] font-['Liberation_Serif',serif] text-[26px] leading-[36px] font-bold text-[#0000e0]">Stackup Information:<Mark className="mt-[6px]" /></h2>
      <div className="h-[60px]" />
      <StackupTable />
      <ThicknessTable />
      <div className="flex h-[30px] items-center justify-between">
        <h2 className="flex items-center pl-[4px] font-['Liberation_Serif',serif] text-[26px] leading-[30px] font-bold text-[#0000e0]">Impedance Information:<Mark className="mt-[6px]" /></h2>
        <Mark className="mr-[3px] mb-[6px]" />
      </div>
      <ImpedanceTable />
      <div className="pt-[2px] pl-[2px] text-[16px] leading-[21px] whitespace-nowrap text-black">
        <Line className="text-[#1010b0]">备注：<Mark /></Line>
        <Line className="pl-[47px] text-[#1010b0]" end={false}><span className="text-[13px]">1.</span>红色标识为调整后的线宽，建议按照调整后的线宽控制阻抗。<Mark /></Line>
        <Line>
          <span className="w-[247px]">客户答复：</span>
          <span className="w-[224px]">接受建议</span>
          <span>不接受建议</span><Mark />
        </Line>
        <Line>备注：<Mark /></Line>
        <Line>答复：<Mark /></Line>
        <Line>审核：<Mark /></Line>
        <Line><span className="w-[519px]">时间：</span>签名：<Mark /></Line>
        <div className="-ml-[2px] flex h-[18px] items-start justify-between">
          <Mark className="mt-[3px]" />
          <span className="mr-[6px] size-[6px] border border-[#888]" />
        </div>
      </div>
      <div className="mt-auto -mr-[19px] -ml-[23px] flex h-[10px] justify-between pr-[9px]">
        <span className="w-[24px] border-t border-r border-[#aaa]" />
        <span className="w-[24px] border-t border-l border-[#aaa]" />
      </div>
      <svg viewBox="0 0 60 170" className="absolute top-[474px] left-[151px] h-[170px] w-[60px]">
        <path d="M7 160L46 27" stroke="#fa0000" strokeWidth="5" strokeLinecap="round" />
        <path d="M53 3L40 27L54 29Z" fill="#fa0000" stroke="#fa0000" strokeWidth="3" strokeLinejoin="round" />
      </svg>
    </main>
  );
}

function WordWindow() {
  return (
    <section className="relative mt-[5px] flex min-w-0 flex-col rounded-tl-md border-t border-l border-black bg-[#a9c8ec] font-['Open_Sans','Noto_Sans_CJK_SC',sans-serif]">
      <WordHeader />
      <div className="flex h-[107px]">
        <div className="w-[5px] shrink-0 bg-linear-to-b from-[#86b3c6] via-[#777] via-20% to-[#333]" />
        <div className="flex min-w-0 flex-1 gap-[3px] overflow-hidden bg-[#cfe1f6] pt-[3px] pl-[5px]">
          <ClipboardGroup />
          <FontGroup />
          <ParagraphGroup />
          <StylesGroup />
          <EditGroup />
        </div>
      </div>
      <div className="h-[5px] border-l-5 border-[#333] bg-[#a9c6ea]" />
      <div className="flex flex-1">
        <div className="flex w-[5px] flex-col bg-[#0c1414]">
          <div className="h-[105px] bg-linear-to-b from-[#333] to-[#c4c4c4]" />
        </div>
        <div className="w-[5px] bg-linear-to-b from-[#a9c6ea] via-[#7fa3d6] to-[#5f85c0]" />
        <Document />
      </div>
      <footer className="h-[21px] border-t-2 border-l-5 border-t-[#46597c] border-l-[#0c1414] bg-[#6690cd] shadow-[inset_0_-3px_0_#a9c6ea]" />
    </section>
  );
}

export default function App() {
  return (
    <div className="grid min-h-screen grid-cols-[minmax(0,860fr)_minmax(0,788fr)] overflow-hidden bg-[#7fc4d4]">
      <GraphicEditor />
      <WordWindow />
    </div>
  );
}
